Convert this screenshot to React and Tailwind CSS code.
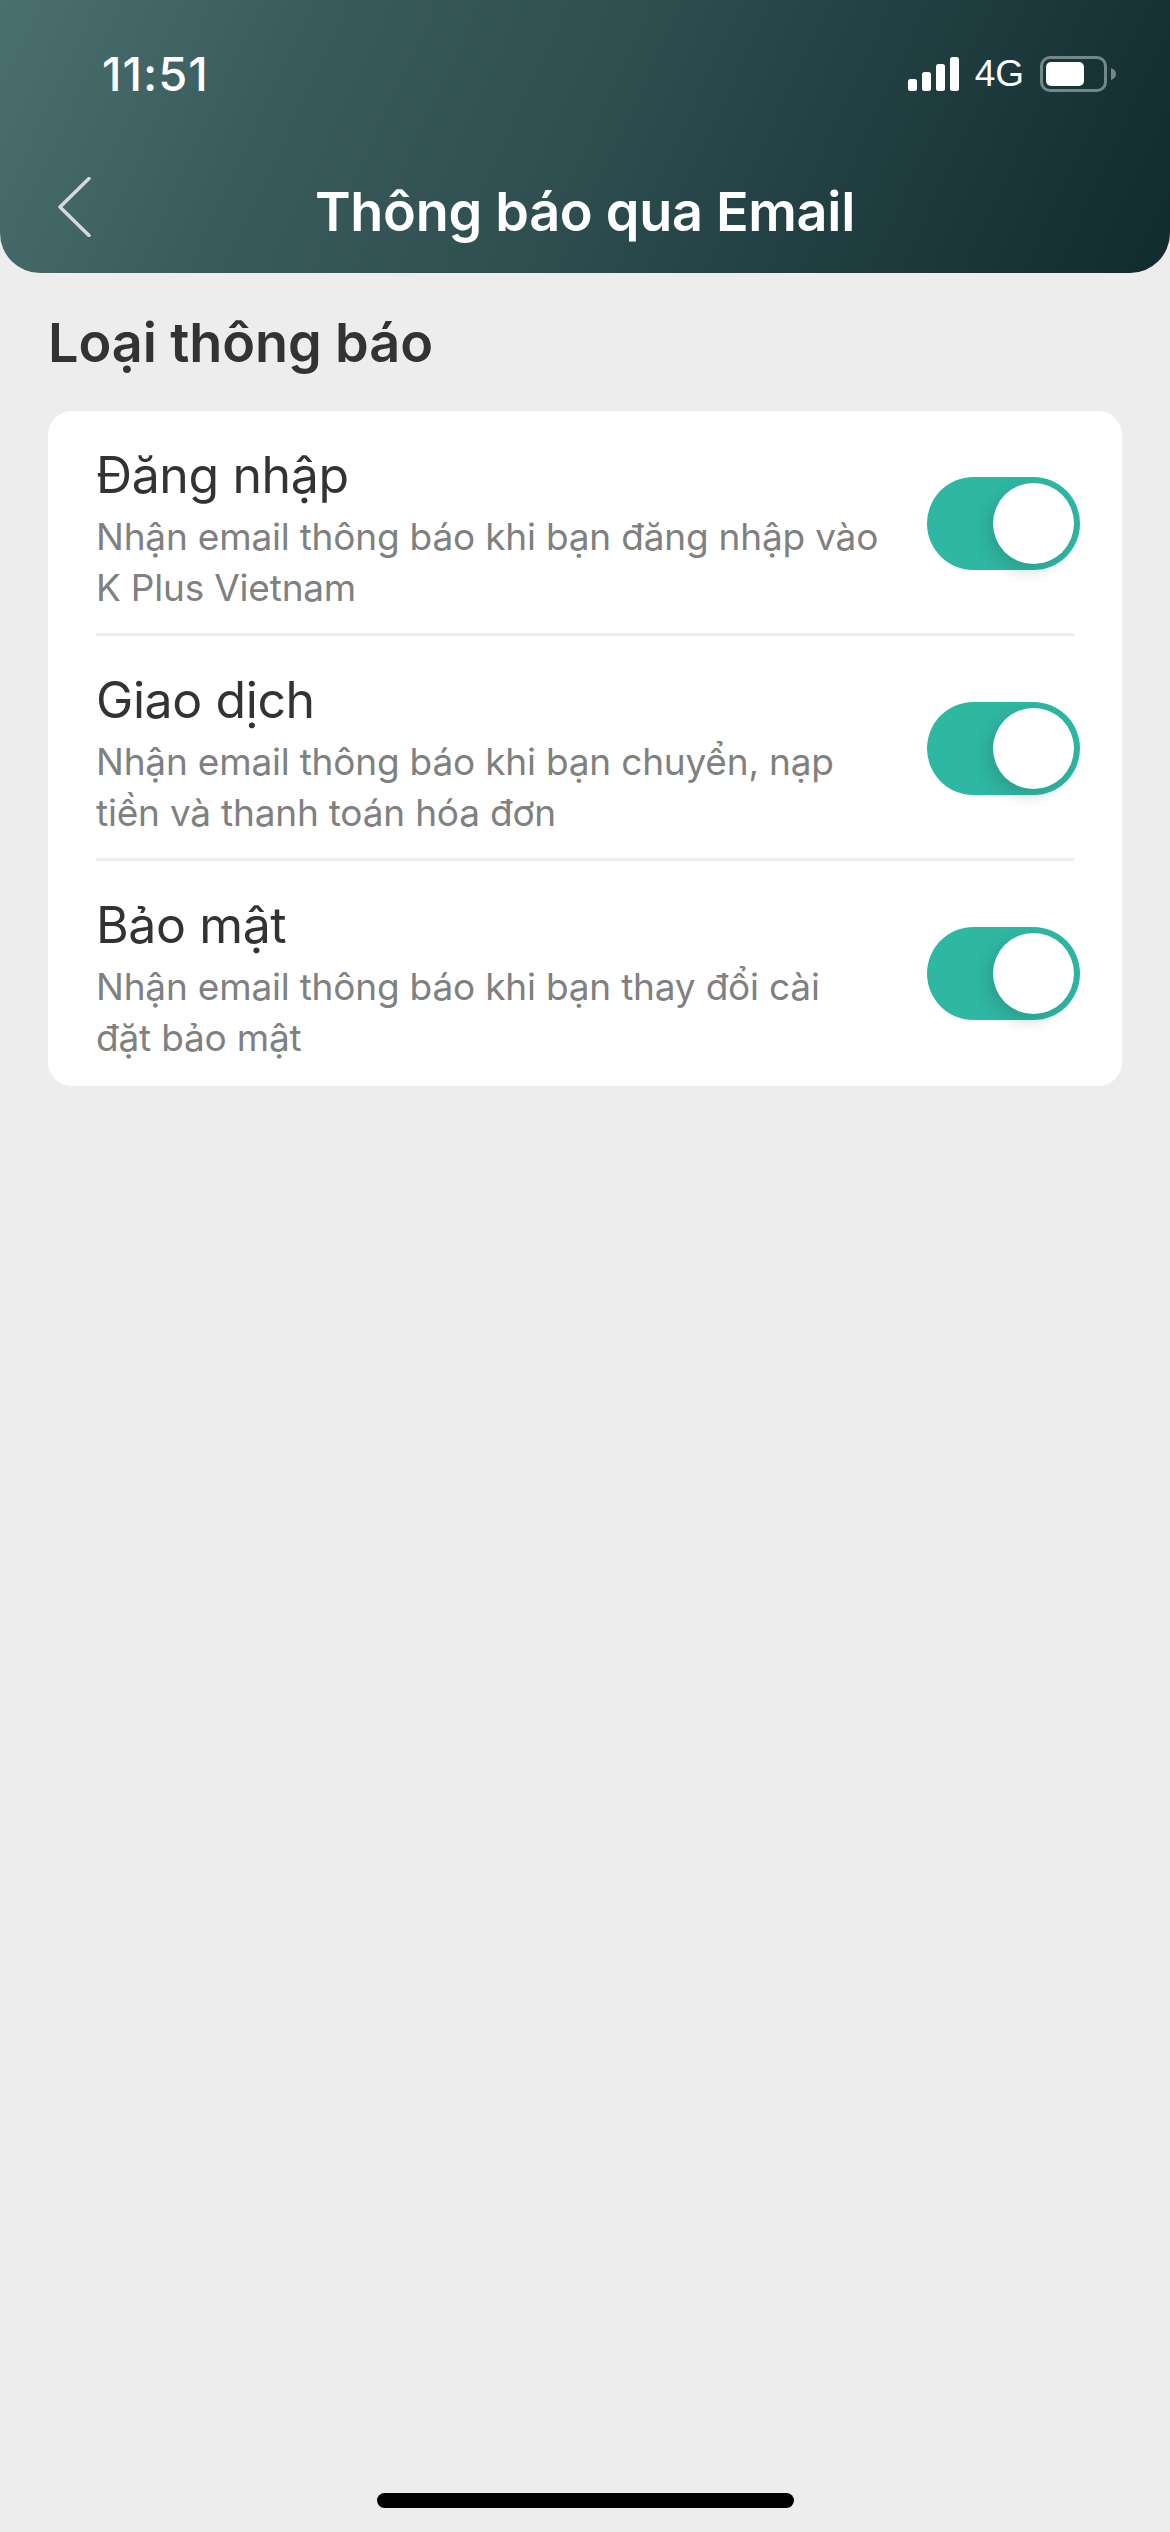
const rows = [
  { title: "Đăng nhập", lines: ["Nhận email thông báo khi bạn đăng nhập vào", "K Plus Vietnam"] },
  { title: "Giao dịch", lines: ["Nhận email thông báo khi bạn chuyển, nạp", "tiền và thanh toán hóa đơn"] },
  { title: "Bảo mật", lines: ["Nhận email thông báo khi bạn thay đổi cài", "đặt bảo mật"] },
];

function Signal() {
  return (
    <svg width="51" height="34" viewBox="0 0 51 34" fill="#fff" className="block">
      <rect x="0" y="22" width="9" height="12" rx="2.5" />
      <rect x="14" y="15" width="9" height="19" rx="2.5" />
      <rect x="28" y="7" width="9" height="27" rx="2.5" />
      <rect x="42" y="0" width="9" height="34" rx="2.5" />
    </svg>
  );
}

function Battery() {
  return (
    <div className="flex items-center">
      <div className="w-[67px] h-[36px] rounded-[10px] border-[3px] border-[#72888a] p-[3px]">
        <div className="w-[38px] h-full rounded-[5px] bg-white" />
      </div>
      <svg width="5" height="12" viewBox="0 0 5 12" className="ml-[4px] block">
        <path d="M0 0c3 1 5 3 5 6s-2 5-5 6z" fill="#72888a" />
      </svg>
    </div>
  );
}

function Toggle() {
  return (
    <div className="w-[153px] h-[93px] mt-[3px] -mr-[6px] shrink-0 rounded-full bg-[#2eb7a3] flex items-center justify-end pr-[6px]">
      <div className="w-[81px] h-[81px] rounded-full bg-white shadow-[-6px_6px_14px_rgba(40,110,100,0.3)]" />
    </div>
  );
}

export default function App() {
  return (
    <div className="min-h-[2532px] flex flex-col bg-[#ededed] font-['Inter','Liberation_Sans',sans-serif]">
      <header className="h-[273px] shrink-0 rounded-b-[40px] bg-[linear-gradient(115deg,#4a706e_0%,#3a5b5c_25%,#2e4e50_50%,#1f3c3f_75%,#112b2e_100%)] text-white">
        <div className="flex items-start justify-between pt-[57px] pl-[102px] pr-[54px]">
          <span className="text-[47px] leading-[34px] font-medium tracking-[1px]">11:51</span>
          <div className="flex items-center h-[36px] -mt-px">
            <Signal />
            <span className="mx-[16px] text-[37px] leading-[36px] font-['Liberation_Sans',sans-serif]">4G</span>
            <Battery />
          </div>
        </div>
        <div className="mt-[75px] grid grid-cols-[1fr_auto_1fr] items-center h-[90px] pl-[58px]">
          <svg width="33" height="60" viewBox="0 0 33 60" className="block -mt-[10px]">
            <path d="M31 1.5 2 30l29 28.5" fill="none" stroke="#d6d9d9" strokeWidth="3.5" strokeLinecap="round" strokeLinejoin="round" />
          </svg>
          <h1 className="text-[54px] leading-[90px] font-semibold tracking-[-0.3px] -ml-[58px]">Thông báo qua Email</h1>
          <div />
        </div>
      </header>

      <h2 className="mt-[40px] ml-[48px] text-[54px] leading-[60px] font-semibold text-[#333333] tracking-[-0.1px]">Loại thông báo</h2>

      <section className="mt-[38px] mx-[48px] h-[675px] rounded-[24px] bg-white px-[48px]">
        {rows.map((r) => (
          <div key={r.title} className="h-[225px] flex items-center justify-between border-b-[3px] border-[#ededed] last:border-transparent">
            <div className="self-start pt-[32px]">
              <div className="text-[50px] leading-[64px] text-[#333333] tracking-[-0.4px]">{r.title}</div>
              <div className="mt-[4px] text-[37px] leading-[51px] text-[#808080] tracking-[-0.2px]">
                {r.lines.map((l) => (
                  <div key={l}>{l}</div>
                ))}
              </div>
            </div>
            <Toggle />
          </div>
        ))}
      </section>

      <div className="mt-auto mb-[24px] mx-auto w-[417px] h-[15px] rounded-full bg-black" />
    </div>
  );
}
